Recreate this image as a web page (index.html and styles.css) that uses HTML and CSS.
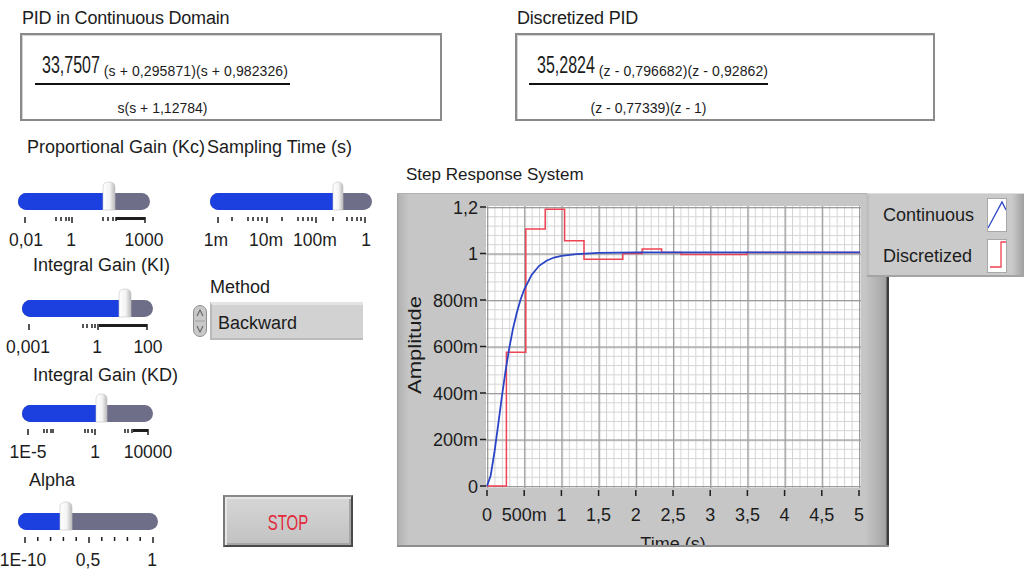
FILE: index.html
```
<!DOCTYPE html>
<html>
<head>
<meta charset="utf-8">
<title>PID Step Response</title>
<link rel="stylesheet" href="styles.css">
</head>
<body>
<div class="top">
  <section class="tf tf-cont">
    <div class="tf-label">PID in Continuous Domain</div>
    <div class="tf-box">
      <div class="frac">
        <div class="num"><span class="big">33,7507</span><span class="small">(s + 0,295871)(s + 0,982326)</span></div>
        <div class="den">s(s + 1,12784)</div>
      </div>
    </div>
  </section>
  <section class="tf tf-disc">
    <div class="tf-label">Discretized PID</div>
    <div class="tf-box">
      <div class="frac">
        <div class="num"><span class="big">35,2824</span><span class="small">(z - 0,796682)(z - 0,92862)</span></div>
        <div class="den">(z - 0,77339)(z - 1)</div>
      </div>
    </div>
  </section>
</div>

<div class="main">
  <div class="col-left">
    <div class="sl sl-1">
      <div class="sl-label">Proportional Gain (Kc)</div>
      <svg class="scale" width="190" height="70" viewBox="0 0 190 70">
        <defs>
          <linearGradient id="thumbGrad" x1="0" y1="0" x2="1" y2="0">
            <stop offset="0" stop-color="#ffffff"/>
            <stop offset="0.55" stop-color="#f4f4f4"/>
            <stop offset="1" stop-color="#b9b9b9"/>
          </linearGradient>
        </defs>
        <rect class="trk" x="18" y="12" width="132" height="17" rx="8.5"/>
        <path class="fill" d="M26.5,12 H109 V29 H26.5 A8.5,8.5 0 0 1 26.5,12 Z"/>
        <path class="thumb" d="M103,29 V6 Q103,1 109,1 Q115,1 115,6 V29 Z"/>
        <path class="tk" d="M25,36V42 M56,36V40 M61,36V40 M66,36V40 M69,36V40 M72,36V42 M103,36V40 M108,36V40 M113,36V40 M116,36V40 M145,36V42"/>
        <rect class="tkbar" x="116" y="36" width="29" height="3"/>
        <text class="sc" x="26" y="65" text-anchor="middle">0,01</text>
        <text class="sc" x="71" y="65" text-anchor="middle">1</text>
        <text class="sc" x="144" y="65" text-anchor="middle">1000</text>
      </svg>
    </div>
    <div class="sl sl-2">
      <div class="sl-label">Integral Gain (KI)</div>
      <svg class="scale" width="190" height="70" viewBox="0 0 190 70">
        <rect class="trk" x="22" y="12" width="131" height="17" rx="8.5"/>
        <path class="fill" d="M30.5,12 H125 V29 H30.5 A8.5,8.5 0 0 1 30.5,12 Z"/>
        <path class="thumb" d="M119,29 V6 Q119,1 125,1 Q131,1 131,6 V29 Z"/>
        <path class="tk" d="M29,36V42 M83,36V40 M87,36V40 M92,36V40 M95,36V40 M98,36V42 M147,36V42"/>
        <rect class="tkbar" x="99" y="36" width="48" height="3"/>
        <text class="sc" x="28" y="65" text-anchor="middle">0,001</text>
        <text class="sc" x="97" y="65" text-anchor="middle">1</text>
        <text class="sc" x="148" y="65" text-anchor="middle">100</text>
      </svg>
    </div>
    <div class="sl sl-3">
      <div class="sl-label">Integral Gain (KD)</div>
      <svg class="scale" width="190" height="70" viewBox="0 0 190 70">
        <rect class="trk" x="22" y="12" width="131" height="17" rx="8.5"/>
        <path class="fill" d="M30.5,12 H101 V29 H30.5 A8.5,8.5 0 0 1 30.5,12 Z"/>
        <path class="thumb" d="M96,29 V6 Q96,1 101.5,1 Q107,1 107,6 V29 Z"/>
        <path class="tk" d="M28,36V42 M44,36V40 M47,36V40 M51,36V40 M53,36V40 M85,36V40 M88,36V40 M92,36V40 M95,36V42 M125,36V40 M128,36V40 M132,36V40 M148,36V42"/>
        <rect class="tkbar" x="133" y="36" width="15" height="3"/>
        <text class="sc" x="28" y="65" text-anchor="middle">1E-5</text>
        <text class="sc" x="95" y="65" text-anchor="middle">1</text>
        <text class="sc" x="148" y="65" text-anchor="middle">10000</text>
      </svg>
    </div>
    <div class="sl sl-4">
      <div class="sl-label">Alpha</div>
      <svg class="scale" width="190" height="70" viewBox="0 0 190 70">
        <rect class="trk" x="18" y="12" width="140" height="17" rx="8.5"/>
        <path class="fill" d="M26.5,12 H66 V29 H26.5 A8.5,8.5 0 0 1 26.5,12 Z"/>
        <path class="thumb" d="M60,29 V6 Q60,1 66,1 Q72,1 72,6 V29 Z"/>
        <path class="tk" d="M25,36V42 M37.8,36V40 M50.6,36V40 M63.4,36V40 M76.2,36V40 M89,36V42 M101.8,36V40 M114.6,36V40 M127.4,36V40 M140.2,36V40 M153,36V42"/>
        <text class="sc" x="23" y="65" text-anchor="middle">1E-10</text>
        <text class="sc" x="88" y="65" text-anchor="middle">0,5</text>
        <text class="sc" x="152" y="65" text-anchor="middle">1</text>
      </svg>
    </div>
  </div>

  <div class="col-mid">
    <div class="sl sl-st">
      <div class="sl-label">Sampling Time (s)</div>
      <svg class="scale" width="200" height="70" viewBox="0 0 200 70">
        <rect class="trk" x="20" y="12" width="162" height="17" rx="8.5"/>
        <path class="fill" d="M28.5,12 H148 V29 H28.5 A8.5,8.5 0 0 1 28.5,12 Z"/>
        <path class="thumb" d="M143,29 V6 Q143,1 148,1 Q153,1 153,6 V29 Z"/>
        <path class="tk" d="M28,36V42 M42,36V40 M58,36V40 M63,36V40 M68,36V40 M72,36V40 M77,36V42 M92,36V40 M108,36V40 M113,36V40 M118,36V40 M122,36V40 M126,36V42 M143,36V40 M157,36V40 M162,36V40 M167,36V40 M171,36V40 M175,36V42"/>
        <text class="sc" x="26" y="65" text-anchor="middle">1m</text>
        <text class="sc" x="76" y="65" text-anchor="middle">10m</text>
        <text class="sc" x="125" y="65" text-anchor="middle">100m</text>
        <text class="sc" x="176" y="65" text-anchor="middle">1</text>
      </svg>
    </div>
    <div class="method-label">Method</div>
    <div class="ring">
      <svg class="incdec" width="14" height="32" viewBox="0 0 14 32">
        <rect x="0.5" y="0.5" width="13" height="31" rx="6.5" fill="#c9c9c9" stroke="#8e8e8e"/>
        <path d="M4,11 L7,5 L10,11" fill="none" stroke="#6a6a6a" stroke-width="1.2"/>
        <path d="M4,21 L7,27 L10,21" fill="none" stroke="#6a6a6a" stroke-width="1.2"/>
        <line x1="2" y1="16" x2="12" y2="16" stroke="#a0a0a0"/>
      </svg>
      <div class="ring-box">Backward</div>
    </div>
    <div class="stop"><span>STOP</span></div>
  </div>

  <div class="col-graph">
    <div class="graph-title">Step Response System</div>
    <div class="graph-wrap">
      <div class="graph-panel">
        <svg class="plot" width="492" height="352" viewBox="0 0 492 352">
          <defs>
            <pattern id="gmin" x="90" y="293" width="7.44" height="9.3" patternUnits="userSpaceOnUse">
              <rect width="1" height="9.3" fill="#d4d4d4"/>
              <rect width="7.44" height="1" fill="#d4d4d4"/>
            </pattern>
            <pattern id="gmaj" x="90" y="293" width="37.2" height="46.5" patternUnits="userSpaceOnUse">
              <rect width="1.3" height="46.5" fill="#9c9c9c"/>
              <rect width="37.2" height="1.3" fill="#9c9c9c"/>
            </pattern>
            <clipPath id="plotclip"><rect x="89" y="13" width="375" height="282"/></clipPath>
          </defs>
          <rect x="89" y="13" width="375" height="282" fill="#ffffff"/>
          <rect x="89" y="13" width="375" height="282" fill="url(#gmin)"/>
          <rect x="89" y="13" width="375" height="282" fill="url(#gmaj)"/>
          <g clip-path="url(#plotclip)">
            <path class="red" d="M90,293 H109.4 V159.3 H128.8 V36.1 H148.2 V16.3 H167.6 V47.7 H187 V66.3 H225.8 V60.5 H245.2 V55.9 H264.6 V59.4 H284 V61.5 H350 V59.6 H463"/>
            <polyline class="blue" points="90,293 93.7,282.5 97.4,259.5 101.2,231.6 104.9,203.5 108.6,177.7 112.3,154.9 116,135.6 119.8,119.8 123.5,106.8 127.2,96.5 134.6,81.9 142.1,72.8 149.5,67.7 157,64.5 164.4,62.8 179.3,61.2 201.6,59.8 240,59.3 463,59.3"/>
          </g>
          <path class="tk" d="M83,14H89 M83,60.5H89 M83,107H89 M83,153.5H89 M83,200H89 M83,246.5H89 M83,293H89"/>
          <text class="ax" x="81" y="20.5" text-anchor="end">1,2</text>
          <text class="ax" x="81" y="67" text-anchor="end">1</text>
          <text class="ax" x="81" y="113.5" text-anchor="end">800m</text>
          <text class="ax" x="81" y="160" text-anchor="end">600m</text>
          <text class="ax" x="81" y="206.5" text-anchor="end">400m</text>
          <text class="ax" x="81" y="253" text-anchor="end">200m</text>
          <text class="ax" x="81" y="299.5" text-anchor="end">0</text>
          <path class="tk" d="M90,297V303 M127.2,297V303 M164.4,297V303 M201.6,297V303 M238.8,297V303 M276,297V303 M313.2,297V303 M350.4,297V303 M387.6,297V303 M424.8,297V303 M462,297V303"/>
          <text class="ax" x="90" y="328" text-anchor="middle">0</text>
          <text class="ax" x="127.2" y="328" text-anchor="middle">500m</text>
          <text class="ax" x="164.4" y="328" text-anchor="middle">1</text>
          <text class="ax" x="201.6" y="328" text-anchor="middle">1,5</text>
          <text class="ax" x="238.8" y="328" text-anchor="middle">2</text>
          <text class="ax" x="276" y="328" text-anchor="middle">2,5</text>
          <text class="ax" x="313.2" y="328" text-anchor="middle">3</text>
          <text class="ax" x="350.4" y="328" text-anchor="middle">3,5</text>
          <text class="ax" x="387.6" y="328" text-anchor="middle">4</text>
          <text class="ax" x="424.8" y="328" text-anchor="middle">4,5</text>
          <text class="ax" x="462" y="328" text-anchor="middle">5</text>
          <text class="ax" x="276" y="357" text-anchor="middle">Time (s)</text>
          <text class="ax" x="24" y="152" text-anchor="middle" transform="rotate(-90 24 152)" textLength="98" lengthAdjust="spacingAndGlyphs">Amplitude</text>
        </svg>
      </div>
      <div class="legend">
        <div class="lg-row">
          <span class="lg-text">Continuous</span>
          <span class="lg-icon">
            <svg width="18" height="32" viewBox="0 0 18 32"><polyline points="0,29 14,3 18,11" fill="none" stroke="#2a44c6" stroke-width="1.3"/></svg>
          </span>
        </div>
        <div class="lg-row">
          <span class="lg-text">Discretized</span>
          <span class="lg-icon">
            <svg width="18" height="32" viewBox="0 0 18 32"><polyline points="2,27 13,27 13,2 18,2" fill="none" stroke="#ee4050" stroke-width="1.3"/></svg>
          </span>
        </div>
      </div>
    </div>
  </div>
</div>
</body>
</html>
```

FILE: styles.css
```
* { box-sizing: border-box; }

html, body {
  margin: 0;
  padding: 0;
}

body {
  width: 1024px;
  height: 575px;
  overflow: hidden;
  background: #ffffff;
  font-family: "Liberation Sans", Arial, sans-serif;
  color: #1c1c1c;
}

/* ---------- transfer function displays ---------- */
.top {
  display: flex;
  padding: 8px 0 0 20px;
}

.tf {
  display: flex;
  flex-direction: column;
}

.tf-disc {
  margin-left: 73px;
}

.tf-label {
  font-size: 18px;
  line-height: 20px;
  height: 20px;
  padding-left: 2px;
  margin-bottom: 5px;
  letter-spacing: -0.2px;
  white-space: nowrap;
}

.tf-box {
  height: 88px;
  background: #ffffff;
  border: 2px solid #8a8a8a;
  box-shadow: inset 1px 1px 0 #d4d4d4;
}

.tf-cont .tf-box { width: 422px; }
.tf-disc .tf-box { width: 420px; }

.frac {
  margin-top: 18px;
}

.tf-cont .frac { width: 255px; margin-left: 13px; }
.tf-disc .frac { width: 239px; margin-left: 12px; }

.num {
  display: flex;
  align-items: flex-end;
  padding-bottom: 5px;
  border-bottom: 2px solid #111111;
  box-sizing: content-box;
  white-space: nowrap;
}

.tf-cont .num { padding-left: 7px; height: 25px; }
.tf-disc .num { padding-left: 8px; height: 25px; }

.big {
  display: inline-block;
  font-size: 16px;
  line-height: 16px;
  transform: scaleY(1.55);
  transform-origin: 0 100%;
  margin-right: 4px;
}

.small {
  font-size: 14px;
  line-height: 14px;
  letter-spacing: 0.1px;
}

.den {
  text-align: center;
  font-size: 14px;
  line-height: 16px;
  margin-top: 15px;
  white-space: nowrap;
}

/* ---------- main area ---------- */
.main {
  display: grid;
  grid-template-columns: 190px 207px 492px;
  align-items: start;
}

.col-left,
.col-mid {
  display: flex;
  flex-direction: column;
  padding-top: 16px;
}

.sl {
  display: flex;
  flex-direction: column;
}

.sl-label {
  font-size: 18px;
  line-height: 20px;
  height: 20px;
  white-space: nowrap;
}

.scale {
  display: block;
}

.sl-1 .sl-label { padding-left: 27px; }
.sl-1 .scale { margin-top: 24px; }

.sl-2 { margin-top: 4px; }
.sl-2 .sl-label { padding-left: 33px; }
.sl-2 .scale { margin-top: 13px; }

.sl-3 { margin-top: 7px; }
.sl-3 .sl-label { padding-left: 33px; }
.sl-3 .scale { margin-top: 8px; }

.sl-4 { margin-top: 7px; }
.sl-4 .sl-label { padding-left: 29px; }
.sl-4 .scale { margin-top: 11px; }

.sl-st .sl-label { padding-left: 17px; }
.sl-st .scale { margin-top: 24px; }

.trk { fill: #6e6e88; }
.fill { fill: #1c3fe0; }
.thumb { fill: url(#thumbGrad); stroke: #c4c4c4; stroke-width: 0.6; }
.tk { stroke: #1e1e1e; stroke-width: 1.5; fill: none; }
.tkbar { fill: #1e1e1e; }
.sc { font-size: 17.5px; fill: #1c1c1c; }

/* ---------- method ring ---------- */
.method-label {
  font-size: 18px;
  line-height: 20px;
  height: 20px;
  margin-top: 26px;
  padding-left: 20px;
}

.ring {
  display: flex;
  align-items: center;
  gap: 3px;
  margin-top: 5px;
  padding-left: 3px;
}

.incdec {
  display: block;
}

.ring-box {
  width: 153px;
  height: 38px;
  background: #d2d2d2;
  border-top: 3px solid #e4e4e4;
  border-left: 2px solid #b8b8b8;
  border-bottom: 2px solid #bcbcbc;
  font-size: 18px;
  line-height: 20px;
  padding: 8px 0 0 6px;
}

/* ---------- stop button ---------- */
.stop {
  width: 130px;
  height: 52px;
  margin-top: 155px;
  margin-left: 33px;
  display: flex;
  align-items: center;
  justify-content: center;
  background: linear-gradient(#d6d6d6, #c2c2c2);
  border: 2px solid #4a4a4a;
  border-top-color: #8a8a8a;
  border-left-color: #7a7a7a;
  box-shadow: inset 2px 2px 0 #e6e6e6, inset -2px -2px 0 #a6a6a6;
  color: #e2283a;
  font-size: 15px;
}

.stop span {
  display: inline-block;
  transform: scaleY(1.5);
}

/* ---------- graph ---------- */
.col-graph {
  padding-top: 44px;
}

.graph-title {
  font-size: 17px;
  line-height: 20px;
  height: 20px;
  padding-left: 9px;
  white-space: nowrap;
}

.graph-wrap {
  position: relative;
  margin-top: 8px;
}

.graph-panel {
  width: 492px;
  height: 354px;
  background: linear-gradient(to right,
    #9e9e9e 0px, #b4b4b4 2px, #c6c6c6 12px,
    #c6c6c6 468px, #b0b0b0 482px, #a2a2a2 489px,
    #3c3c3c 490px, #3c3c3c 492px);
  box-shadow: inset 0 -2px 0 #8e8e8e, inset 0 1px 0 #b2b2b2;
}

.plot {
  display: block;
}

.ax {
  font-size: 18px;
  fill: #1c1c1c;
}

.red {
  fill: none;
  stroke: #ef4252;
  stroke-width: 1.5;
}

.blue {
  fill: none;
  stroke: #2a44c6;
  stroke-width: 1.8;
}

.legend {
  position: absolute;
  left: 470px;
  top: 0;
  width: 157px;
  height: 84px;
  padding-top: 2px;
  background: linear-gradient(to right,
    #b8b8b8 0px, #cacaca 3px, #cacaca 145px, #a0a0a0 157px);
  box-shadow: inset 0 1px 0 #dedede, inset 0 -2px 0 #a4a4a4;
}

.lg-row {
  display: flex;
  align-items: center;
  height: 40px;
  padding-left: 16px;
}

.lg-row + .lg-row {
  margin-top: 1px;
}

.lg-text {
  width: 104px;
  font-size: 18px;
  line-height: 20px;
}

.lg-icon {
  display: block;
  width: 20px;
  height: 34px;
  background: #ffffff;
  border: 1px solid #a8a8a8;
}

.lg-icon svg {
  display: block;
}
```
